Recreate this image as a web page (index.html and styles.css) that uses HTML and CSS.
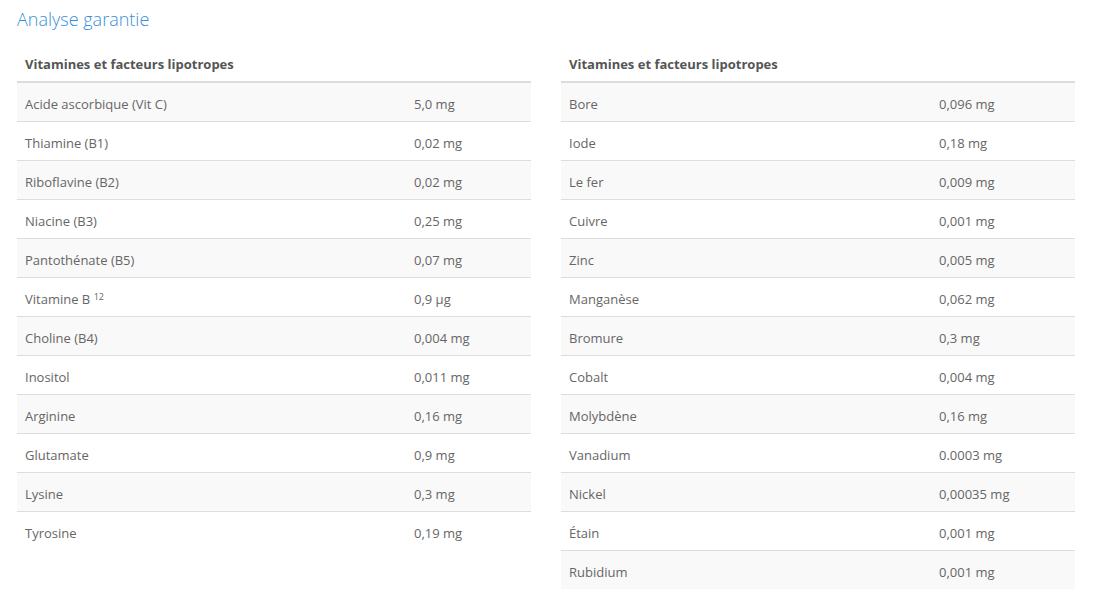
FILE: index.html
```html
<!DOCTYPE html>
<html lang="fr">
<head>
<meta charset="utf-8">
<title>Analyse garantie</title>
<link rel="stylesheet" href="styles.css">
</head>
<body>
<h2 class="title">Analyse garantie</h2>
<div class="tables">
  <table class="tbl tbl-left">
    <colgroup><col class="col-name"><col></colgroup>
    <thead><tr><th colspan="2">Vitamines et facteurs lipotropes</th></tr></thead>
    <tbody>
      <tr><td>Acide ascorbique (Vit C)</td><td>5,0 mg</td></tr>
      <tr><td>Thiamine (B1)</td><td>0,02 mg</td></tr>
      <tr><td>Riboflavine (B2)</td><td>0,02 mg</td></tr>
      <tr><td>Niacine (B3)</td><td>0,25 mg</td></tr>
      <tr><td>Pantothénate (B5)</td><td>0,07 mg</td></tr>
      <tr><td>Vitamine B <sup>12</sup></td><td>0,9 µg</td></tr>
      <tr><td>Choline (B4)</td><td>0,004 mg</td></tr>
      <tr><td>Inositol</td><td>0,011 mg</td></tr>
      <tr><td>Arginine</td><td>0,16 mg</td></tr>
      <tr><td>Glutamate</td><td>0,9 mg</td></tr>
      <tr><td>Lysine</td><td>0,3 mg</td></tr>
      <tr><td>Tyrosine</td><td>0,19 mg</td></tr>
    </tbody>
  </table>
  <table class="tbl tbl-right">
    <colgroup><col class="col-name"><col></colgroup>
    <thead><tr><th colspan="2">Vitamines et facteurs lipotropes</th></tr></thead>
    <tbody>
      <tr><td>Bore</td><td>0,096 mg</td></tr>
      <tr><td>Iode</td><td>0,18 mg</td></tr>
      <tr><td>Le fer</td><td>0,009 mg</td></tr>
      <tr><td>Cuivre</td><td>0,001 mg</td></tr>
      <tr><td>Zinc</td><td>0,005 mg</td></tr>
      <tr><td>Manganèse</td><td>0,062 mg</td></tr>
      <tr><td>Bromure</td><td>0,3 mg</td></tr>
      <tr><td>Cobalt</td><td>0,004 mg</td></tr>
      <tr><td>Molybdène</td><td>0,16 mg</td></tr>
      <tr><td>Vanadium</td><td>0.0003 mg</td></tr>
      <tr><td>Nickel</td><td>0,00035 mg</td></tr>
      <tr><td>Étain</td><td>0,001 mg</td></tr>
      <tr><td>Rubidium</td><td>0,001 mg</td></tr>
    </tbody>
  </table>
</div>
</body>
</html>
```
FILE: styles.css
```css
html, body {
  margin: 0;
  padding: 0;
  background: #fff;
}
body {
  font-family: "Open Sans", "Liberation Sans", sans-serif;
  color: #666;
  padding: 0 20px 0 17px;
}
.title {
  margin: 0;
  padding-top: 7px;
  font-size: 18px;
  line-height: 25px;
  font-weight: 300;
  color: #3a8fd8;
}
.tables {
  display: flex;
  gap: 30px;
  margin-top: 13px;
  align-items: flex-start;
}
.tbl {
  width: 514px;
  border-collapse: collapse;
  table-layout: fixed;
  font-size: 13px;
}
.tbl th {
  text-align: left;
  font-weight: 700;
  color: #555;
  padding: 10px 8px 8px;
  line-height: 18px;
  border-bottom: 2px solid #ddd;
}
.tbl td {
  padding: 12px 8px 8px;
  line-height: 18px;
  border-top: 1px solid #ddd;
  vertical-align: top;
}
.tbl tbody tr:first-child td {
  border-top: 0;
}
.tbl tbody tr:nth-child(odd) td {
  background: #f9f9f9;
}
.tbl-left .col-name { width: 389px; }
.tbl-right .col-name { width: 370px; }
.tbl sup {
  font-size: 9px;
  line-height: 0;
  vertical-align: 4px;
}
```
